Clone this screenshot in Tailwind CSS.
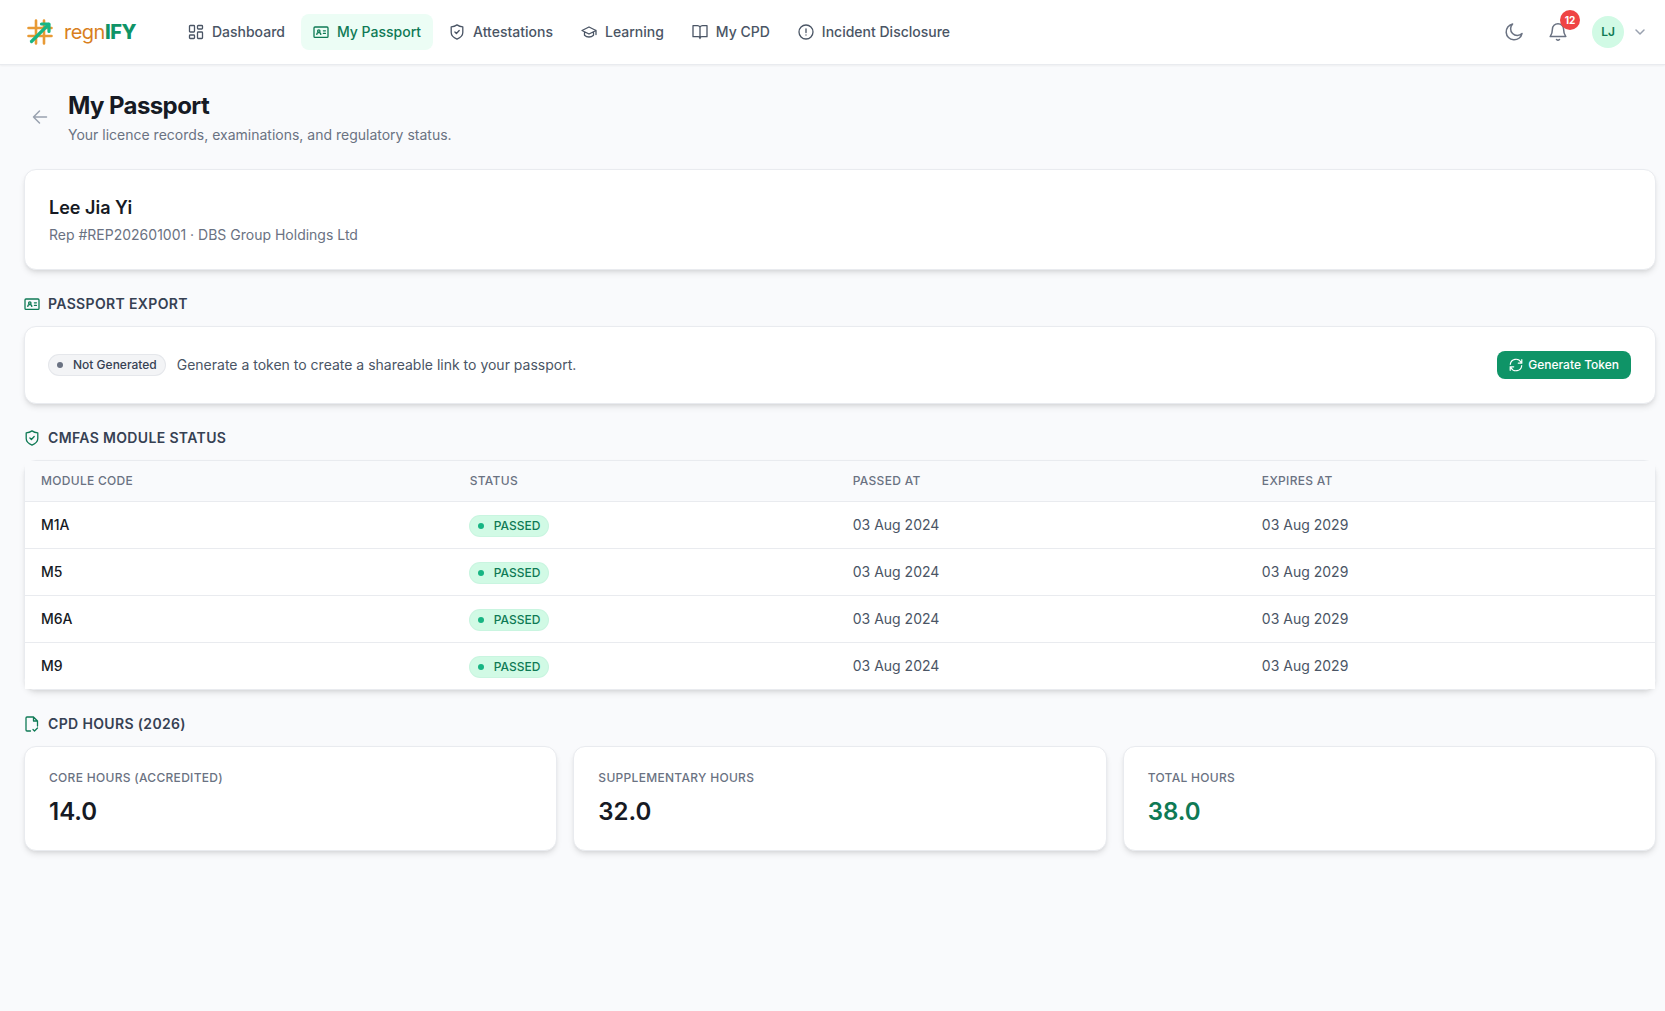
<!DOCTYPE html>
<html lang="en">
<head>
  <meta charset="UTF-8">
  <meta name="viewport" content="width=device-width, initial-scale=1.0">
  <title>My Passport - regnIFY</title>
  <script src="https://cdn.jsdelivr.net/npm/@tailwindcss/browser@4"></script>
</head>
<body class="bg-[#f9fafc] font-['Inter',sans-serif] text-[#161a24]">
  <!-- Shared icons -->
  <svg class="hidden" aria-hidden="true">
    <symbol id="icon-id" viewBox="0 0 16 16" fill="none" stroke="currentColor" stroke-width="1.3" stroke-linecap="round" stroke-linejoin="round">
      <rect x="1" y="3" width="14" height="10.4" rx="1"/>
      <circle cx="5.8" cy="7" r="1.2"/>
      <path d="M3.8 10.4c0-2.4 4-2.4 4 0M10.4 6.8h2M10.4 9.4h2"/>
    </symbol>
    <symbol id="icon-shield" viewBox="0 0 16 16" fill="none" stroke="currentColor" stroke-width="1.3" stroke-linecap="round" stroke-linejoin="round">
      <path d="M8 .9c1.700 1.200 3.600 1.800 5.800 1.900v5.600c0 3.200-2.600 5.300-5.800 6.700-3.200-1.400-5.800-3.500-5.800-6.700V2.800C4.400 2.700 6.300 2.100 8 .9z"/>
      <path d="M5.900 8l1.500 1.500 2.800-3"/>
    </symbol>
  </svg>

  <header class="flex h-[65px] items-center border-b border-[#e9ebef] bg-white pr-[17px] pl-6 shadow-xs">
    <a href="#" class="flex items-center gap-2 text-xl tracking-tight text-[#d97f1e]">
      <svg class="size-8" viewBox="0 0 32 32" fill="none" stroke-linecap="round" stroke-linejoin="round" aria-hidden="true">
        <path d="M4.500 12h23M4.500 20h23M12 4.500v23M20 4.500v23" stroke="#e89a35" stroke-width="2.600"/>
        <path d="M7.500 25.500L24.500 8.500" stroke="#17b583" stroke-width="3.200"/>
        <path d="M17.500 8h7.500v7.500" stroke="#17b583" stroke-width="3.200"/>
      </svg>
      <span>regn<b class="font-extrabold text-[#0f9467]">IFY</b></span>
    </a>

    <nav class="ml-10 flex items-center gap-1 text-sm font-medium text-gray-600">
      <a href="#" class="flex items-center gap-2 rounded-lg px-3 py-2">
        <svg class="size-4" viewBox="0 0 16 16" fill="none" stroke="currentColor" stroke-width="1.3" stroke-linejoin="round" aria-hidden="true">
          <rect x="1.5" y="1.5" width="5" height="6.5" rx=".8"/><rect x="9.5" y="1.5" width="5" height="3.5" rx=".8"/>
          <rect x="9.5" y="8" width="5" height="6.5" rx=".8"/><rect x="1.5" y="11" width="5" height="3.5" rx=".8"/>
        </svg>
        Dashboard
      </a>
      <a href="#" aria-current="page" class="flex items-center gap-2 rounded-lg bg-[#ecfdf5] px-3 py-2 text-[#0f7a55]">
        <svg class="size-4" aria-hidden="true"><use href="#icon-id"/></svg>
        My Passport
      </a>
      <a href="#" class="flex items-center gap-2 rounded-lg px-3 py-2">
        <svg class="size-4" aria-hidden="true"><use href="#icon-shield"/></svg>
        Attestations
      </a>
      <a href="#" class="flex items-center gap-2 rounded-lg px-3 py-2">
        <svg class="size-4" viewBox="0 0 16 16" fill="none" stroke="currentColor" stroke-width="1.3" stroke-linecap="round" stroke-linejoin="round" aria-hidden="true">
          <path d="M1 6.500L8 3l7 3.500L8 10 1 6.500zM15 6.500v4M3.500 8v3.200c2.500 2.400 6.500 2.400 9 0V8"/>
        </svg>
        Learning
      </a>
      <a href="#" class="flex items-center gap-2 rounded-lg px-3 py-2">
        <svg class="size-4" viewBox="0 0 16 16" fill="none" stroke="currentColor" stroke-width="1.3" stroke-linecap="round" stroke-linejoin="round" aria-hidden="true">
          <path d="M8 3.200C7.500 2.200 6.800 1.700 5.500 1.700H1v11h5c1.200 0 2 .6 2 1.800 0-1.200.8-1.800 2-1.800h5v-11h-4.500C9.200 1.700 8.500 2.200 8 3.200zM8 3.200v11"/>
        </svg>
        My CPD
      </a>
      <a href="#" class="flex items-center gap-2 rounded-lg px-3 py-2">
        <svg class="size-4" viewBox="0 0 16 16" fill="none" stroke="currentColor" stroke-width="1.3" stroke-linecap="round" aria-hidden="true">
          <circle cx="8" cy="8" r="7"/><path d="M8 4.800v3.700M8 11v.1"/>
        </svg>
        Incident Disclosure
      </a>
    </nav>

    <div class="ml-auto flex items-center text-gray-500">
      <button type="button" aria-label="Dark mode" class="p-3">
        <svg class="size-5" viewBox="0 0 20 20" fill="none" stroke="currentColor" stroke-width="1.5" stroke-linejoin="round" aria-hidden="true">
          <path d="M8.600 2A8 8 0 1 0 18 11.500 6.500 6.500 0 0 1 8.600 2z"/>
        </svg>
      </button>
      <button type="button" aria-label="Notifications" class="relative p-3">
        <svg class="size-5" viewBox="0 0 20 20" fill="none" stroke="currentColor" stroke-width="1.5" stroke-linecap="round" stroke-linejoin="round" aria-hidden="true">
          <path d="M10 1.700a5.600 5.600 0 0 0-5.600 5.600c0 4-1 5.300-2.200 7.200h15.600c-1.200-1.900-2.200-3.200-2.200-7.200A5.600 5.600 0 0 0 10 1.700zM8.500 17.500c.9.800 2.100.8 3 0"/>
        </svg>
        <span class="absolute top-0 right-0 flex size-5 items-center justify-center rounded-full bg-[#ef4444] text-[10px] font-bold text-white">12</span>
      </button>
      <button type="button" aria-label="Account menu" class="ml-3 flex items-center gap-2">
        <span class="flex size-8 items-center justify-center rounded-full bg-[#d1fae5] text-xs font-semibold text-[#0f7a55]">LJ</span>
        <svg class="size-4 text-gray-400" viewBox="0 0 16 16" fill="none" stroke="currentColor" stroke-width="1.5" stroke-linecap="round" stroke-linejoin="round" aria-hidden="true"><path d="M4 6l4 4 4-4"/></svg>
      </button>
    </div>
  </header>

  <main class="flex flex-col gap-6 py-6 pr-[9px] pl-6">
    <div class="flex items-center gap-3">
      <a href="#" aria-label="Back" class="p-1.5 text-gray-400">
        <svg class="size-5" viewBox="0 0 20 20" fill="none" stroke="currentColor" stroke-width="1.5" stroke-linecap="round" stroke-linejoin="round" aria-hidden="true"><path d="M16.500 10h-13M9.500 4l-6 6 6 6"/></svg>
      </a>
      <div>
        <h1 class="text-2xl leading-[34px] font-bold tracking-tight">My Passport</h1>
        <p class="mt-0.5 text-sm text-gray-500">Your licence records, examinations, and regulatory status.</p>
      </div>
    </div>

    <section class="rounded-xl border border-[#e9ebef] bg-white p-6 shadow-md">
      <h2 class="text-lg leading-[27px] font-semibold">Lee Jia Yi</h2>
      <p class="mt-1 text-sm text-gray-500">Rep #REP202601001 · DBS Group Holdings Ltd</p>
    </section>

    <section>
      <h2 class="mb-3 flex items-center gap-2 text-sm font-semibold tracking-wide text-gray-700 uppercase">
        <svg class="size-4 text-[#0f7a55]" aria-hidden="true"><use href="#icon-id"/></svg>
        Passport Export
      </h2>
      <div class="flex items-center gap-3 rounded-xl border border-[#e9ebef] bg-white p-6 shadow-md">
        <span class="inline-flex items-center gap-2.5 rounded-full bg-gray-100 px-2 py-0.5 text-xs font-medium text-gray-700 ring-1 ring-gray-200">
          <span class="size-1.5 rounded-full bg-gray-500"></span>
          Not Generated
        </span>
        <p class="text-sm text-gray-600">Generate a token to create a shareable link to your passport.</p>
        <button type="button" class="ml-auto flex h-7 items-center gap-[5px] rounded-lg bg-[#0f9467] px-3 text-xs font-medium text-white">
          <svg class="size-3.5" viewBox="0 0 14 14" fill="none" stroke="currentColor" stroke-width="1.2" stroke-linecap="round" stroke-linejoin="round" aria-hidden="true">
            <path d="M1.300 6.300A5.700 5.700 0 0 1 12 4.300l.8.900M12.800 1.700v3.500H9.300M12.700 7.700A5.700 5.700 0 0 1 2 9.700l-.8-.9M1.200 12.300V8.800h3.500"/>
          </svg>
          Generate Token
        </button>
      </div>
    </section>

    <section>
      <h2 class="mb-3 flex items-center gap-2 text-sm font-semibold tracking-wide text-gray-700 uppercase">
        <svg class="size-4 text-[#0f7a55]" aria-hidden="true"><use href="#icon-shield"/></svg>
        CMFAS Module Status
      </h2>
      <div class="rounded-xl border border-[#e9ebef] shadow-md">
        <table class="w-full table-fixed border-collapse text-left text-sm">
          <colgroup>
            <col class="w-[26.3%]"><col class="w-[23.5%]"><col class="w-[25.1%]"><col>
          </colgroup>
          <thead class="bg-[#f9fafc] text-xs text-gray-500 uppercase">
            <tr class="h-10 border-b border-[#e9ebef]">
              <th class="px-4 font-medium tracking-wide">Module Code</th>
              <th class="px-4 font-medium tracking-wide">Status</th>
              <th class="px-4 font-medium tracking-wide">Passed At</th>
              <th class="px-4 font-medium tracking-wide">Expires At</th>
            </tr>
          </thead>
          <tbody id="modules" class="divide-y divide-[#e9ebef] bg-white"></tbody>
        </table>
      </div>
    </section>

    <section>
      <h2 class="mb-3 flex items-center gap-2 text-sm font-semibold tracking-wide text-gray-700 uppercase">
        <svg class="size-4 text-[#0f7a55]" viewBox="0 0 16 16" fill="none" stroke="currentColor" stroke-width="1.3" stroke-linecap="round" stroke-linejoin="round" aria-hidden="true">
          <path d="M6.500 15H3a1 1 0 0 1-1-1V2a1 1 0 0 1 1-1h6.500L13.500 5v5M9.500 1v4h4M9 13.500l1.500 1.500 3-3"/>
        </svg>
        CPD Hours (2026)
      </h2>
      <div class="grid grid-cols-3 gap-4">
        <div class="rounded-xl border border-[#e9ebef] bg-white px-6 pt-[23px] pb-6 shadow-md">
          <p class="text-xs font-medium tracking-wide text-gray-500 uppercase">Core Hours (Accredited)</p>
          <p class="mt-3 text-2xl leading-7 font-semibold">14.0</p>
        </div>
        <div class="rounded-xl border border-[#e9ebef] bg-white px-6 pt-[23px] pb-6 shadow-md">
          <p class="text-xs font-medium tracking-wide text-gray-500 uppercase">Supplementary Hours</p>
          <p class="mt-3 text-2xl leading-7 font-semibold">32.0</p>
        </div>
        <div class="rounded-xl border border-[#e9ebef] bg-white px-6 pt-[23px] pb-6 shadow-md">
          <p class="text-xs font-medium tracking-wide text-gray-500 uppercase">Total Hours</p>
          <p class="mt-3 text-2xl leading-7 font-semibold text-[#0f7a55]">38.0</p>
        </div>
      </div>
    </section>
  </main>

  <script>
    const modules = ['M1A', 'M5', 'M6A', 'M9'];

    document.getElementById('modules').innerHTML = modules.map(code => `
      <tr class="h-[47px]">
        <td class="px-4 font-medium">${code}</td>
        <td class="px-4">
          <span class="inline-flex items-center gap-2.5 rounded-full bg-[#d1fae5] px-2 py-0.5 text-xs font-medium text-[#0f7a55] ring-1 ring-[#c9f5e0]">
            <span class="size-1.5 rounded-full bg-[#17b583]"></span>
            PASSED
          </span>
        </td>
        <td class="px-4 text-gray-600">03 Aug 2024</td>
        <td class="px-4 text-gray-600">03 Aug 2029</td>
      </tr>`).join('');
  </script>
</body>
</html>
